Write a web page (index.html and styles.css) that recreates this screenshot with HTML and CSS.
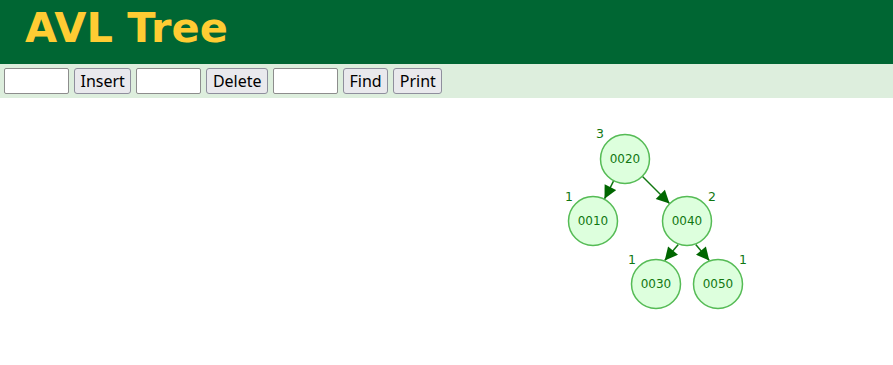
FILE: index.html
```html
<!DOCTYPE html>
<html lang="en">
<head>
    <meta charset="UTF-8">
    <title>AVL Tree</title>
    <link rel="stylesheet" href="styles.css">
</head>
<body>
    <div class="header">
        <h1>AVL Tree</h1>
    </div>

    <div class="toolbar">
        <input type="text" id="insertValue">
        <button id="insertBtn">Insert</button>
        <input type="text" id="deleteValue">
        <button id="deleteBtn">Delete</button>
        <input type="text" id="findValue">
        <button id="findBtn">Find</button>
        <button id="printBtn">Print</button>
    </div>

    <svg class="canvas" width="893" height="267" viewBox="0 98 893 267">
        <defs>
            <marker id="arrow" viewBox="0 0 10 10" refX="10" refY="5" markerWidth="14" markerHeight="13" markerUnits="userSpaceOnUse" orient="auto">
                <path d="M0,0 L10,5 L0,10 z" class="arrow-head"></path>
            </marker>
        </defs>

        <!-- edges -->
        <line class="edge" x1="613.5" y1="181.2" x2="604.5" y2="198.8" marker-end="url(#arrow)"></line>
        <line class="edge" x1="642.5" y1="176.5" x2="669.5" y2="203.5" marker-end="url(#arrow)"></line>
        <line class="edge" x1="678.3" y1="244.4" x2="664.7" y2="260.6" marker-end="url(#arrow)"></line>
        <line class="edge" x1="695.7" y1="244.4" x2="709.3" y2="260.6" marker-end="url(#arrow)"></line>

        <!-- nodes -->
        <circle class="node" cx="625" cy="159" r="24.5"></circle>
        <text class="key" x="625" y="159">0020</text>
        <text class="height" x="600" y="138">3</text>

        <circle class="node" cx="593" cy="221" r="24.5"></circle>
        <text class="key" x="593" y="221">0010</text>
        <text class="height" x="569" y="201">1</text>

        <circle class="node" cx="687" cy="221" r="24.5"></circle>
        <text class="key" x="687" y="221">0040</text>
        <text class="height" x="712" y="201">2</text>

        <circle class="node" cx="656" cy="284" r="24.5"></circle>
        <text class="key" x="656" y="284">0030</text>
        <text class="height" x="632" y="264">1</text>

        <circle class="node" cx="718" cy="284" r="24.5"></circle>
        <text class="key" x="718" y="284">0050</text>
        <text class="height" x="743" y="264">1</text>
    </svg>
</body>
</html>
```

FILE: styles.css
```css
body {
    margin: 0;
    font-family: "Noto Sans", "DejaVu Sans", sans-serif;
    background-color: white;
}
.header {
    height: 64px;
    background-color: #006633;
}
.header h1 {
    margin: 0;
    padding-left: 25px;
    font-family: "DejaVu Sans", Verdana, sans-serif;
    font-size: 41.5px;
    font-weight: bold;
    line-height: 56px;
    color: #ffcc33;
}
.toolbar {
    display: flex;
    align-items: center;
    gap: 5px;
    height: 34px;
    padding: 0 4px;
    background-color: #ddeedd;
}
.toolbar input {
    box-sizing: border-box;
    width: 65px;
    height: 26px;
    margin: 0;
    padding: 1px 2px;
    border: 1px solid #8d8d8d;
    border-radius: 2px;
    background-color: white;
}
.toolbar button {
    box-sizing: border-box;
    height: 26px;
    margin: 0;
    padding: 0 5.5px;
    border: 1px solid #8f8f9d;
    border-radius: 3px;
    background-color: #e9e9ed;
    color: black;
    font-family: "Noto Sans", sans-serif;
    font-size: 16px;
    line-height: 22px;
    cursor: pointer;
}
.toolbar button:hover {
    background-color: #d0d0d7;
}
.canvas {
    display: block;
}
.edge {
    stroke: #117711;
    stroke-width: 1.5;
}
.arrow-head {
    fill: #006600;
}
.node {
    fill: #ddffdd;
    stroke: #55bb55;
    stroke-width: 1.5;
}
.key {
    font-family: "DejaVu Sans", Verdana, sans-serif;
    font-size: 12px;
    fill: #117711;
    text-anchor: middle;
    dominant-baseline: central;
}
.height {
    font-family: "DejaVu Sans", Verdana, sans-serif;
    font-size: 12.5px;
    fill: #117711;
    text-anchor: middle;
}
```
